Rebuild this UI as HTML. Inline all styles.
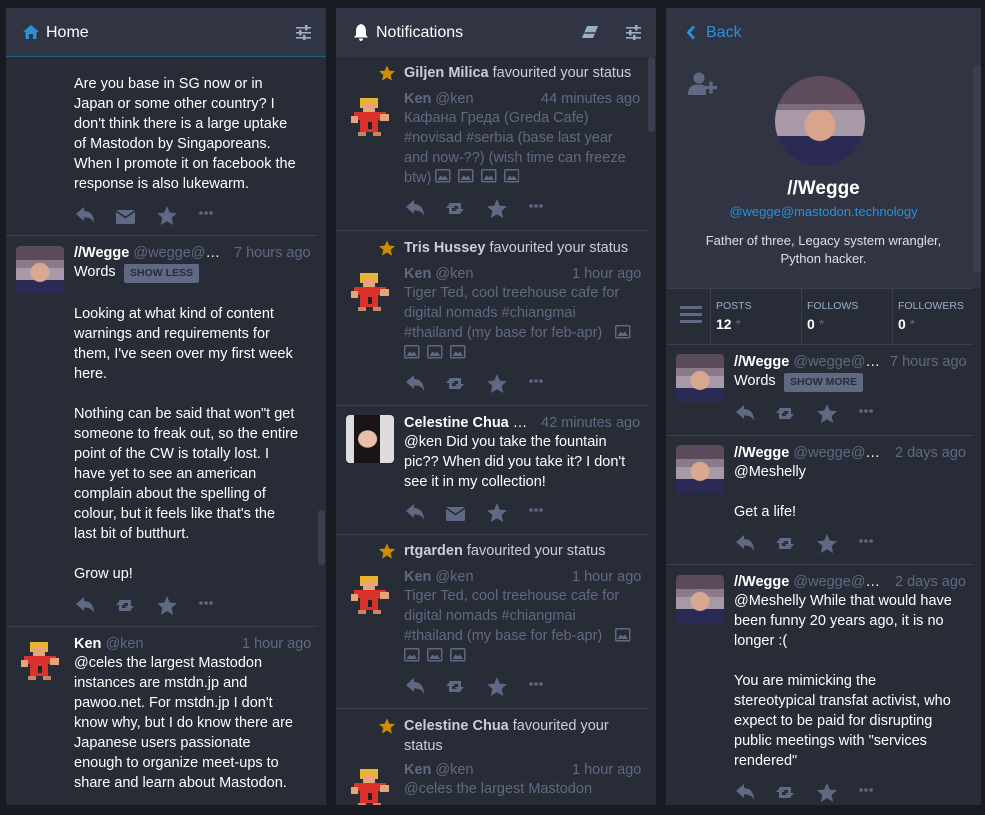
<!DOCTYPE html>
<html><head><meta charset="utf-8"><style>
*{margin:0;padding:0;box-sizing:border-box}
body{width:985px;height:815px;background:#191b22;font-family:"Liberation Sans","Noto Sans CJK JP",sans-serif;position:relative;overflow:hidden;color:#fff}
.a{position:absolute}
.col{position:absolute;top:8px;height:797px;background:#282c37;overflow:hidden}
.hd{position:absolute;left:0;top:0;right:0;height:49px;background:#313543;font-size:16px;line-height:49px}
.t{position:absolute;font-size:14.5px;line-height:20px;color:#fff;white-space:nowrap}
.nm{overflow:hidden;text-overflow:ellipsis}
.dim{color:#606984}
.b{font-weight:bold}
.hr{position:absolute;height:1px;background:#393f4f}
.av{position:absolute;width:48px;height:48px;border-radius:4px;overflow:hidden}
.wg{background:radial-gradient(circle at 50% 55%,#d9a890 0 9px,transparent 10px),linear-gradient(#5a4a5a 0 14px,#8a7a8a 14px 22px,#a79aa8 22px 34px,#2a2a55 34px);}
.btn{position:absolute;background:#606984;color:#282c37;font-size:10.5px;font-weight:bold;line-height:19px;padding:0 6px;border-radius:2px}
.sb{position:absolute;background:#393f4f;border-radius:4px}
.act{position:absolute;width:150px;height:20px}
</style></head><body>
<svg width="0" height="0" style="position:absolute"><defs>
<g id="rp"><path d="M2 9 L10 2 V6 C16 6 20 10 20 18 C18 13.5 15 12.5 10 12.5 V16 Z"/></g>
<g id="rt"><path d="M45 6 H57 V12 H60 L55.5 17 L51 12 H54 V9 H47 Z M57 17 H45 V11 H42 L46.5 6 L51 11 H48 V14 H55 Z" transform="translate(0,-1)"/></g>
<g id="ml"><rect x="42" y="5" width="19" height="14" rx="1.5"/><path d="M42 6 L51.5 12.5 L61 6" stroke="#282c37" stroke-width="1.6" fill="none"/></g>
<g id="st"><path d="M93 1 L95.8 7.6 L103 8.2 L97.6 12.9 L99.2 20 L93 16.2 L86.8 20 L88.4 12.9 L83 8.2 L90.2 7.6 Z"/></g>
<g id="dt"><circle cx="127" cy="8" r="1.8"/><circle cx="132" cy="8" r="1.8"/><circle cx="137" cy="8" r="1.8"/></g>
<g id="ico"><rect x="0.75" y="0.75" width="14" height="12" rx="1" fill="none" stroke="#606984" stroke-width="1.5"/><path d="M2.5 11 L5.5 6.5 L8 8.5 L10 6.5 L13 11 Z"/></g>
<g id="kn"><rect x="14" y="6" width="18" height="10" fill="#e9b530"/><rect x="17" y="12" width="12" height="9" fill="#e6a47c"/><rect x="8" y="20" width="32" height="8" fill="#d8322a"/><rect x="5" y="24" width="7" height="7" fill="#e6a47c"/><rect x="34" y="22" width="9" height="7" fill="#e6a47c"/><rect x="14" y="28" width="18" height="12" fill="#d8322a"/><rect x="22" y="30" width="4" height="7" fill="#222"/><rect x="12" y="40" width="8" height="4" fill="#c7875e"/><rect x="27" y="40" width="8" height="4" fill="#c7875e"/></g>
</defs></svg>

<!-- Column 1 -->
<div class="col" style="left:6px;width:320px">
 <div class="hd"><svg class="a" style="left:17px;top:17px" width="16" height="14" viewBox="0 0 16 14"><path d="M8 0 L16 7 H13.5 V14 H10 V9 H6 V14 H2.5 V7 H0 Z" fill="#2b90d9"/></svg><span class="a" style="left:40px;color:#fff">Home</span>
 <svg class="a" style="left:290px;top:17px" width="15" height="15" viewBox="0 0 15 15" fill="#9baec8"><rect y="2" width="15" height="1.6"/><rect y="7" width="15" height="1.6"/><rect y="12" width="15" height="1.6"/><rect x="9" y="0" width="2.5" height="5.5"/><rect x="3" y="5" width="2.5" height="5.5"/><rect x="7" y="10" width="2.5" height="5"/></svg></div>
 <div class="a" style="left:0;top:48px;width:320px;height:1px;background:#1f5e80"></div>
 <div class="sb" style="left:312px;top:502px;width:7px;height:55px"></div>
</div>
<div class="t" style="left:74px;top:74px">Are you base in SG now or in<br>Japan or some other country? I<br>don't think there is a large uptake<br>of Mastodon by Singaporeans.<br>When I promote it on facebook the<br>response is also lukewarm.</div>
<svg class="act" style="left:74px;top:205px" viewBox="0 0 150 20" fill="#606984"><use href="#rp"/><use href="#ml"/><use href="#st"/><use href="#dt"/></svg>
<div class="hr" style="left:6px;top:235px;width:312px"></div>
<div class="av wg" style="left:16px;top:246px"></div>
<div class="t nm" style="left:74px;top:243px;width:156px"><b>//Wegge</b> <span class="dim">@wegge@mastodon</span></div>
<div class="t dim" style="left:234px;top:243px">7 hours ago</div>
<div class="t" style="left:74px;top:262px">Words</div>
<div class="btn" style="left:124px;top:264px">SHOW LESS</div>
<div class="t" style="left:74px;top:304px">Looking at what kind of content<br>warnings and requirements for<br>them, I've seen over my first week<br>here.<br><br>Nothing can be said that won"t get<br>someone to freak out, so the entire<br>point of the CW is totally lost. I<br>have yet to see an american<br>complain about the spelling of<br>colour, but it feels like that's the<br>last bit of butthurt.<br><br>Grow up!</div>
<svg class="act" style="left:74px;top:595px" viewBox="0 0 150 20" fill="#606984"><use href="#rp"/><use href="#rt"/><use href="#st"/><use href="#dt"/></svg>
<div class="hr" style="left:6px;top:626px;width:312px"></div>
<svg class="a" style="left:16px;top:636px" width="48" height="48"><use href="#kn"/></svg>
<div class="t" style="left:74px;top:634px"><b>Ken</b> <span class="dim">@ken</span></div>
<div class="t dim" style="left:242px;top:634px">1 hour ago</div>
<div class="t" style="left:74px;top:653px">@celes the largest Mastodon<br>instances are mstdn.jp and<br>pawoo.net. For mstdn.jp I don't<br>know why, but I do know there are<br>Japanese users passionate<br>enough to organize meet-ups to<br>share and learn about Mastodon.</div>

<!-- Column 2 -->
<div class="col" style="left:336px;width:320px">
 <div class="hd"><svg class="a" style="left:17px;top:16px" width="16" height="17" viewBox="0 0 16 17" fill="#fff"><path d="M8 0 C4 1 3 4 3 8 V11 L1 13.5 H15 L13 11 V8 C13 4 12 1 8 0 Z M6 14.5 H10 C10 16 9 17 8 17 C7 17 6 16 6 14.5 Z"/></svg><span class="a" style="left:40px">Notifications</span>
 <svg class="a" style="left:245px;top:17px" width="18" height="14" viewBox="0 0 18 14"><path d="M6 1 H17 L12 13 H1 Z" fill="#9baec8"/><path d="M3.5 8 H14" stroke="#313543" stroke-width="1.5"/></svg>
 <svg class="a" style="left:290px;top:17px" width="15" height="15" viewBox="0 0 15 15" fill="#9baec8"><rect y="2" width="15" height="1.6"/><rect y="7" width="15" height="1.6"/><rect y="12" width="15" height="1.6"/><rect x="9" y="0" width="2.5" height="5.5"/><rect x="3" y="5" width="2.5" height="5.5"/><rect x="7" y="10" width="2.5" height="5"/></svg></div>
 <div class="sb" style="left:312px;top:49px;width:7px;height:75px"></div>
</div>
<!-- notif 1 -->
<svg class="a" style="left:379px;top:65px" width="16" height="16" viewBox="83 1 20 19" fill="#ca8f04"><use href="#st"/></svg>
<div class="t" style="left:404px;top:63px;color:#c8cde0"><b>Giljen Milica</b> favourited your status</div>
<svg class="a" style="left:346px;top:92px" width="48" height="48"><use href="#kn"/></svg>
<div class="t dim" style="left:404px;top:89px"><b>Ken</b> @ken</div>
<div class="t dim" style="left:541px;top:89px">44 minutes ago</div>
<div class="t dim" style="left:404px;top:108px">Кафана Греда (Greda Cafe)<br>#novisad #serbia (base last year<br>and now-??) (wish time can freeze<br>btw) <svg width="84" height="14" fill="#606984" style="vertical-align:-1px"><use href="#ico"/><use href="#ico" x="23"/><use href="#ico" x="46"/><use href="#ico" x="69"/></svg></div>
<svg class="act" style="left:404px;top:198px" viewBox="0 0 150 20" fill="#606984"><use href="#rp"/><use href="#rt"/><use href="#st"/><use href="#dt"/></svg>
<div class="hr" style="left:336px;top:230px;width:312px"></div>
<!-- notif 2 -->
<svg class="a" style="left:379px;top:240px" width="16" height="16" viewBox="83 1 20 19" fill="#ca8f04"><use href="#st"/></svg>
<div class="t" style="left:404px;top:238px;color:#c8cde0"><b>Tris Hussey</b> favourited your status</div>
<svg class="a" style="left:346px;top:267px" width="48" height="48"><use href="#kn"/></svg>
<div class="t dim" style="left:404px;top:264px"><b>Ken</b> @ken</div>
<div class="t dim" style="left:572px;top:264px">1 hour ago</div>
<div class="t dim" style="left:404px;top:283px">Tiger Ted, cool treehouse cafe for<br>digital nomads #chiangmai<br>#thailand (my base for feb-apr)</div>
<svg class="a" style="left:615px;top:325px" width="16" height="14" fill="#606984"><use href="#ico"/></svg>
<svg class="a" style="left:404px;top:345px" width="62" height="14" fill="#606984"><use href="#ico"/><use href="#ico" x="23"/><use href="#ico" x="46"/></svg>
<svg class="act" style="left:404px;top:373px" viewBox="0 0 150 20" fill="#606984"><use href="#rp"/><use href="#rt"/><use href="#st"/><use href="#dt"/></svg>
<div class="hr" style="left:336px;top:405px;width:312px"></div>
<!-- Celestine -->
<div class="av" style="left:346px;top:415px;background:radial-gradient(ellipse at 45% 50%,#e8c0aa 0 9px,transparent 10px),linear-gradient(90deg,#ddd 0 8px,#1a1414 8px 34px,#ddd 34px)"></div>
<div class="t nm" style="left:404px;top:413px;width:133px"><b>Celestine Chua</b> <span class="dim">@celestine</span></div>
<div class="t dim" style="left:541px;top:413px">42 minutes ago</div>
<div class="t" style="left:404px;top:432px">@ken Did you take the fountain<br>pic?? When did you take it? I don't<br>see it in my collection!</div>
<svg class="act" style="left:404px;top:502px" viewBox="0 0 150 20" fill="#606984"><use href="#rp"/><use href="#ml"/><use href="#st"/><use href="#dt"/></svg>
<div class="hr" style="left:336px;top:534px;width:312px"></div>
<!-- rtgarden -->
<svg class="a" style="left:379px;top:543px" width="16" height="16" viewBox="83 1 20 19" fill="#ca8f04"><use href="#st"/></svg>
<div class="t" style="left:404px;top:541px;color:#c8cde0"><b>rtgarden</b> favourited your status</div>
<svg class="a" style="left:346px;top:570px" width="48" height="48"><use href="#kn"/></svg>
<div class="t dim" style="left:404px;top:567px"><b>Ken</b> @ken</div>
<div class="t dim" style="left:572px;top:567px">1 hour ago</div>
<div class="t dim" style="left:404px;top:586px">Tiger Ted, cool treehouse cafe for<br>digital nomads #chiangmai<br>#thailand (my base for feb-apr)</div>
<svg class="a" style="left:615px;top:628px" width="16" height="14" fill="#606984"><use href="#ico"/></svg>
<svg class="a" style="left:404px;top:648px" width="62" height="14" fill="#606984"><use href="#ico"/><use href="#ico" x="23"/><use href="#ico" x="46"/></svg>
<svg class="act" style="left:404px;top:676px" viewBox="0 0 150 20" fill="#606984"><use href="#rp"/><use href="#rt"/><use href="#st"/><use href="#dt"/></svg>
<div class="hr" style="left:336px;top:708px;width:312px"></div>
<svg class="a" style="left:379px;top:718px" width="16" height="16" viewBox="83 1 20 19" fill="#ca8f04"><use href="#st"/></svg>
<div class="t" style="left:404px;top:716px;color:#c8cde0"><b>Celestine Chua</b> favourited your<br>status</div>
<svg class="a" style="left:346px;top:763px" width="48" height="48"><use href="#kn"/></svg>
<div class="t dim" style="left:404px;top:760px"><b>Ken</b> @ken</div>
<div class="t dim" style="left:572px;top:760px">1 hour ago</div>
<div class="t dim" style="left:404px;top:779px">@celes the largest Mastodon</div>
<div class="a" style="left:336px;top:805px;width:320px;height:10px;background:#191b22"></div>

<!-- Column 3 -->
<div class="col" style="left:666px;width:315px">
 <div class="a" style="left:0;top:0;width:315px;height:280px;background:#313543"></div>
 <svg class="a" style="left:20px;top:17px" width="10" height="15" viewBox="0 0 10 15"><path d="M8 1.5 L2.5 7.5 L8 13.5" stroke="#2b90d9" stroke-width="2.8" fill="none"/></svg>
 <span class="a" style="left:40px;top:0;line-height:49px;font-size:16px;color:#2b90d9">Back</span>
 <div class="sb" style="left:307px;top:57px;width:8px;height:208px;background:#3a3f50"></div>
 <svg class="a" style="left:21px;top:64px" width="31" height="24" viewBox="0 0 31 24" fill="#606984"><circle cx="12" cy="6" r="5.5"/><path d="M1 23 C1 15 5 12.5 12 12.5 C16 12.5 18 13.5 19 15 V23 Z"/><rect x="18" y="14" width="12" height="3.2"/><rect x="22.4" y="9.6" width="3.2" height="12"/></svg>
 <div class="a" style="left:109px;top:68px;width:90px;height:90px;border-radius:50%;background:radial-gradient(circle at 50% 55%,#d8a58c 0 15px,transparent 16px),linear-gradient(#5e4b5c 0 28px,#7d6b7b 28px 34px,#a899a7 34px 60px,#2a2a55 60px)"></div>
 <div class="a b" style="left:0;width:315px;top:170px;text-align:center;font-size:19px;line-height:22px">//Wegge</div>
 <div class="a" style="left:0;width:315px;top:196px;text-align:center;font-size:13px;color:#2b90d9">@wegge@mastodon.technology</div>
 <div class="a" style="left:0;width:315px;top:224px;text-align:center;font-size:13px;line-height:18px;color:#d9e1e8">Father of three, Legacy system wrangler,<br>Python hacker.</div>
 <div class="a" style="left:0;top:280px;width:307px;height:1px;background:#393f4f"></div>
 <div class="a" style="left:0;top:336px;width:307px;height:1px;background:#393f4f"></div>
 <div class="a" style="left:44px;top:280px;width:1px;height:57px;background:#393f4f"></div>
 <div class="a" style="left:135px;top:280px;width:1px;height:57px;background:#393f4f"></div>
 <div class="a" style="left:226px;top:280px;width:1px;height:57px;background:#393f4f"></div>
 <svg class="a" style="left:14px;top:298px" width="22" height="18" fill="#606984"><rect y="0" width="22" height="3"/><rect y="7" width="22" height="3"/><rect y="14" width="22" height="3"/></svg>
 <div class="a" style="left:50px;top:292px;font-size:10.5px;color:#9baec8">POSTS</div>
 <div class="a" style="left:50px;top:308px;font-size:14px;font-weight:bold">12 <span style="color:#606984;font-weight:normal">*</span></div>
 <div class="a" style="left:141px;top:292px;font-size:10.5px;color:#9baec8">FOLLOWS</div>
 <div class="a" style="left:141px;top:308px;font-size:14px;font-weight:bold">0 <span style="color:#606984;font-weight:normal">*</span></div>
 <div class="a" style="left:232px;top:292px;font-size:10.5px;color:#9baec8">FOLLOWERS</div>
 <div class="a" style="left:232px;top:308px;font-size:14px;font-weight:bold">0 <span style="color:#606984;font-weight:normal">*</span></div>
</div>
<div class="av wg" style="left:676px;top:354px"></div>
<div class="t nm" style="left:734px;top:352px;width:152px"><b>//Wegge</b> <span class="dim">@wegge@mastodon</span></div>
<div class="t dim" style="left:890px;top:352px">7 hours ago</div>
<div class="t" style="left:734px;top:371px">Words</div>
<div class="btn" style="left:784px;top:373px">SHOW MORE</div>
<svg class="act" style="left:734px;top:403px" viewBox="0 0 150 20" fill="#606984"><use href="#rp"/><use href="#rt"/><use href="#st"/><use href="#dt"/></svg>
<div class="hr" style="left:666px;top:435px;width:307px"></div>
<div class="av wg" style="left:676px;top:445px"></div>
<div class="t nm" style="left:734px;top:443px;width:157px"><b>//Wegge</b> <span class="dim">@wegge@mastodon</span></div>
<div class="t dim" style="left:895px;top:443px">2 days ago</div>
<div class="t" style="left:734px;top:462px">@Meshelly<br><br>Get a life!</div>
<svg class="act" style="left:734px;top:533px" viewBox="0 0 150 20" fill="#606984"><use href="#rp"/><use href="#rt"/><use href="#st"/><use href="#dt"/></svg>
<div class="hr" style="left:666px;top:564px;width:307px"></div>
<div class="av wg" style="left:676px;top:575px"></div>
<div class="t nm" style="left:734px;top:572px;width:157px"><b>//Wegge</b> <span class="dim">@wegge@mastodon</span></div>
<div class="t dim" style="left:895px;top:572px">2 days ago</div>
<div class="t" style="left:734px;top:591px">@Meshelly While that would have<br>been funny 20 years ago, it is no<br>longer :(<br><br>You are mimicking the<br>stereotypical transfat activist, who<br>expect to be paid for disrupting<br>public meetings with "services<br>rendered"</div>
<svg class="act" style="left:734px;top:782px" viewBox="0 0 150 20" fill="#606984"><use href="#rp"/><use href="#rt"/><use href="#st"/><use href="#dt"/></svg>
</body></html>
